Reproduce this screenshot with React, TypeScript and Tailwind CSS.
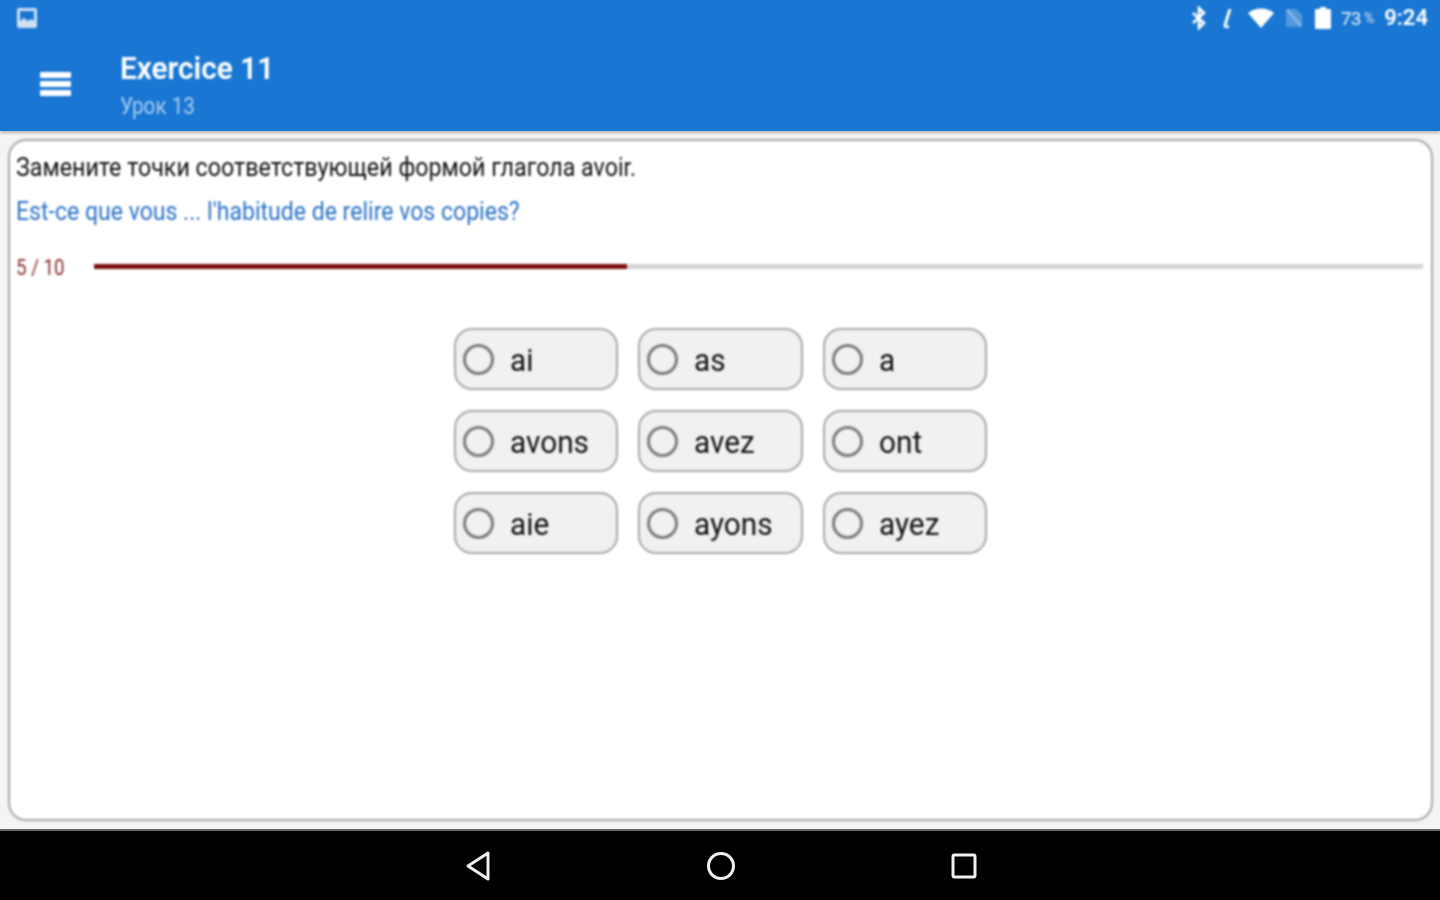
import React from 'react';

const options = ['ai', 'as', 'a', 'avons', 'avez', 'ont', 'aie', 'ayons', 'ayez'];

function StatusIcons() {
  return (
    <div className="flex items-center text-white">
      <svg width="16" height="24" viewBox="0 0 16 24" className="mr-[13px]" fill="none" stroke="#fff" strokeWidth="2.6">
        <path d="M2 7l11 10-5 5V2l5 5L2 17" />
      </svg>
      <svg width="14" height="24" viewBox="0 0 14 24" className="mr-[14px]" fill="none" stroke="#fff" strokeWidth="2.8">
        <path d="M10 3L5 19c-.4 1.5.5 2.2 4 1.6" />
      </svg>
      <svg width="26" height="20" viewBox="0 0 26 20" className="mr-[11px]">
        <path d="M0 5C7-1 19-1 26 5L13 20z" fill="#fff" />
      </svg>
      <svg width="18" height="20" viewBox="0 0 18 20" className="mr-[12px]">
        <path d="M1 1h10l6 6v12H1z" fill="#fff" fillOpacity="0.25" />
        <path d="M2 2l14 16" stroke="#fff" strokeOpacity="0.35" strokeWidth="2" />
      </svg>
      <svg width="16" height="22" viewBox="0 0 16 22" className="mr-[10px]">
        <path d="M5 0h6v2h4a1 1 0 0 1 1 1v18a1 1 0 0 1-1 1H1a1 1 0 0 1-1-1V3a1 1 0 0 1 1-1h4z" fill="#fff" />
      </svg>
      <span className="text-[19px] leading-none text-white/90 tracking-[-0.5px]">73</span>
      <span className="ml-[3px] mr-[10px] text-[14px] leading-none text-white/80">%</span>
      <span className="text-[22px] leading-none font-semibold text-white">9:24</span>
    </div>
  );
}

function Option({ label }: { label: string }) {
  return (
    <div className="flex h-[62px] items-center rounded-[18px] border-2 border-[#a8a8a8] bg-[#f1f1f1] pl-[7px]">
      <span className="h-[31px] w-[31px] shrink-0 rounded-full border-[3px] border-[#7c7c7c]" />
      <span className="ml-[16px] pt-[2px] text-[32px] leading-none text-[#111111] [transform:scaleX(0.93)] origin-left">{label}</span>
    </div>
  );
}

export default function App() {
  return (
    <div className="flex h-[900px] w-[1440px] flex-col overflow-hidden bg-[#f4f4f4] font-['Roboto',sans-serif]">
      <header className="h-[131px] shrink-0 bg-[#1976d2] shadow-[0_2px_3px_rgba(0,0,0,0.25)]">
        <div className="blur-[1px]">
          <div className="flex h-[36px] items-center justify-between pl-[17px] pr-[12px]">
            <svg width="20" height="20" viewBox="0 0 20 20">
              <rect x="0" y="0" width="20" height="20" rx="2" fill="#cfe0f3" />
              <rect x="3" y="3" width="14" height="10" fill="#1976d2" />
              <path d="M3 13l4-3 4 3 3-2 3 2v3H3z" fill="#cfe0f3" />
            </svg>
            <StatusIcons />
          </div>
          <div className="flex h-[95px] items-start">
            <div className="mt-[36px] ml-[40px] flex w-[31px] flex-col gap-[3px]">
              <div className="h-[6px] rounded-[1px] bg-white" />
              <div className="h-[6px] rounded-[1px] bg-white" />
              <div className="h-[6px] rounded-[1px] bg-white" />
            </div>
            <div className="ml-[49px] flex flex-col">
              <div className="mt-[15px] text-[31px] leading-[36px] font-semibold text-white [transform:scaleX(0.96)] origin-left">Exercice 11</div>
              <div className="mt-[5px] text-[23px] leading-[30px] text-[#a9cdf0] [transform:scaleX(0.9)] origin-left">Урок 13</div>
            </div>
          </div>
        </div>
      </header>

      <main className="mx-[8px] mt-[8px] flex h-[682px] w-[1425px] shrink-0 flex-col rounded-[18px] border-2 border-[#a8a8a8] bg-white pl-[6px] pr-[8px] blur-[1px]">
        <p className="mt-[12px] text-[25px] leading-[30px] text-[#111111] whitespace-nowrap [transform:scaleX(0.93)] origin-left">Замените точки соответствующей формой глагола avoir.</p>
        <p className="mt-[14px] text-[25px] leading-[30px] text-[#2a72c8] whitespace-nowrap [transform:scaleX(0.922)] origin-left">Est-ce que vous ... l'habitude de relire vos copies?</p>
        <div className="mt-[24px] flex items-center">
          <span className="w-[78px] shrink-0 pt-[3px] text-[22px] leading-[28px] text-[#842626] [transform:scaleX(0.85)] origin-left">5 / 10</span>
          <div className="h-[5px] flex-1 bg-[#d4d4d4]">
            <div className="h-full w-[533px] bg-[#7f0f0f]" />
          </div>
        </div>
        <div className="mt-[46px] ml-[438px] grid w-[533px] grid-cols-3 gap-x-[20px] gap-y-[20px]">
          {options.map(option => (
            <Option key={option} label={option} />
          ))}
        </div>
      </main>

      <nav className="mt-[8px] h-[71px] shrink-0 border-t-2 border-[#666] bg-black">
        <div className="flex h-full items-center justify-center gap-[215px] pl-[2px] blur-[0.7px]">
          <svg width="26" height="30" viewBox="0 0 26 30" fill="none" stroke="#f0f0f0" strokeWidth="3" strokeLinejoin="round">
            <path d="M23 2v26L3 15z" />
          </svg>
          <svg width="30" height="30" viewBox="0 0 30 30" fill="none" stroke="#f0f0f0" strokeWidth="3">
            <circle cx="15" cy="15" r="12.5" />
          </svg>
          <svg width="26" height="26" viewBox="0 0 26 26" fill="none" stroke="#f0f0f0" strokeWidth="3" strokeLinejoin="round">
            <rect x="2" y="2" width="22" height="22" rx="1.5" />
          </svg>
        </div>
      </nav>
    </div>
  );
}
